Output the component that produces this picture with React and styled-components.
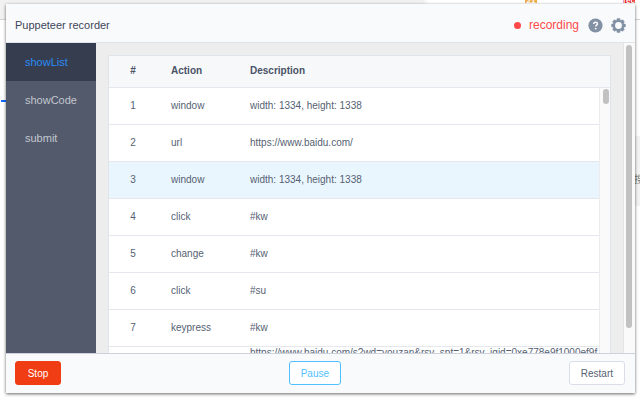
import styled, { createGlobalStyle } from "styled-components";
import { useState } from "react";

const steps = [
  { id: 1, action: "window", description: "width: 1334, height: 1338" },
  { id: 2, action: "url", description: "https://www.baidu.com/" },
  { id: 3, action: "window", description: "width: 1334, height: 1338" },
  { id: 4, action: "click", description: "#kw" },
  { id: 5, action: "change", description: "#kw" },
  { id: 6, action: "click", description: "#su" },
  { id: 7, action: "keypress", description: "#kw" },
  {
    id: 8,
    action: "url",
    description:
      "https://www.baidu.com/s?wd=youzan&rsv_spt=1&rsv_iqid=0xe778e9f1000ef9f5&issp=1&f=8&rsv_bp=0&rsv_idx=2&ie=utf-8&tn=baiduhome_pg&rsv_enter=1&rsv_sug3=6&rsv_sug1=4",
  },
];

const menu = ["showList", "showCode", "submit"];

export default function App() {
  const [active, setActive] = useState("showList");
  const [hovered, setHovered] = useState(3);

  return (
    <Page>
      <GlobalStyle />
      <Backdrop>
        <TopStrip>
          <Badge $color="#f0ad4e">21</Badge>
          <Badge $color="#ee1c25">rec</Badge>
        </TopStrip>
        <PageMark />
        <PageSide>
          <span>搜</span>
        </PageSide>
      </Backdrop>

      <Panel>
        <Header>
          <Title>Puppeteer recorder</Title>
          <Status>recording</Status>
          <IconButton aria-label="Help">
            <HelpIcon />
          </IconButton>
          <IconButton aria-label="Settings">
            <GearIcon />
          </IconButton>
        </Header>

        <Body>
          <Sidebar>
            {menu.map((item) => (
              <MenuItem key={item} $active={item === active} onClick={() => setActive(item)}>
                {item}
              </MenuItem>
            ))}
          </Sidebar>
          <Content>
            <TableCard>
              <Table>
                <thead>
                  <tr>
                    <th>#</th>
                    <th>Action</th>
                    <th>Description</th>
                  </tr>
                </thead>
                <tbody>
                  {steps.map((step) => (
                    <Row
                      key={step.id}
                      $hovered={step.id === hovered}
                      onMouseEnter={() => setHovered(step.id)}
                    >
                      <td>{step.id}</td>
                      <td>{step.action}</td>
                      <td>{step.description}</td>
                    </Row>
                  ))}
                </tbody>
              </Table>
              <InnerTrack>
                <Thumb $height="15px" />
              </InnerTrack>
            </TableCard>
          </Content>
          <OuterTrack>
            <Thumb $height="92%" />
          </OuterTrack>
        </Body>

        <Footer>
          <StopButton>Stop</StopButton>
          <PauseButton>Pause</PauseButton>
          <Button>Restart</Button>
        </Footer>
      </Panel>
    </Page>
  );
}

function HelpIcon() {
  return (
    <svg width="15" height="15" viewBox="0 0 15 15" aria-hidden="true">
      <circle cx="7.5" cy="7.5" r="7.1" fill="#8391a5" />
      <path
        d="M5.7 6.1c0-1.2.8-1.9 1.9-1.9s1.9.7 1.9 1.6c0 1.4-1.8 1.3-1.8 2.8"
        fill="none"
        stroke="#fff"
        strokeWidth="1.4"
      />
      <circle cx="7.7" cy="10.6" r="0.9" fill="#fff" />
    </svg>
  );
}

function GearIcon() {
  return (
    <svg width="15" height="15" viewBox="0 0 15 15" aria-hidden="true">
      <g fill="#8391a5">
        {[0, 45, 90, 135].map((angle) => (
          <rect
            key={angle}
            x="5.7"
            y="0.3"
            width="3.6"
            height="14.4"
            rx="0.7"
            transform={`rotate(${angle} 7.5 7.5)`}
          />
        ))}
        <circle cx="7.5" cy="7.5" r="5.7" />
      </g>
      <circle cx="7.5" cy="7.5" r="3.4" fill="#f9fafc" />
    </svg>
  );
}

// Page
const GlobalStyle = createGlobalStyle`
  * {
    box-sizing: border-box;
  }
  body {
    margin: 0;
    background: #fff;
    font-family: "Liberation Sans", Arial, "Noto Sans CJK SC", sans-serif;
  }
  button {
    font-family: inherit;
    cursor: pointer;
  }
`;

const Page = styled.div`
  position: relative;
  height: 100vh;
  padding: 4px 5px 7px 6px;
  overflow: hidden;
`;

const Backdrop = styled.div`
  position: absolute;
  inset: 0;
`;

const TopStrip = styled.div`
  display: flex;
  justify-content: flex-end;
  gap: 86px;
  height: 20px;
  padding-right: 5px;
  border-bottom: 1px solid #d4d4d4;
  background: linear-gradient(to right, #f1f1f1 66%, #fff 67%);
`;

const Badge = styled.span`
  height: 3px;
  width: 12px;
  overflow: hidden;
  background: ${(props) => props.$color};
  color: #fff;
  font-size: 8px;
  font-weight: bold;
  line-height: 1px;
  text-align: center;
`;

const PageMark = styled.div`
  width: 8px;
  height: 2px;
  margin: 80px 0 0 1px;
  background: #0a6cff;
`;

const PageSide = styled.div`
  width: 6px;
  height: 70px;
  margin: 34px 0 0 auto;
  padding-top: 36px;
  overflow: hidden;
  background: #f3f3f3;
  color: #777;
  font-size: 10px;
  line-height: 16px;
`;

const Panel = styled.div`
  position: relative;
  display: flex;
  flex-direction: column;
  height: 100%;
  background: #f9fafc;
  box-shadow: 0 1px 3px rgba(0, 0, 0, 0.6);
`;

// Header
const Header = styled.header`
  display: flex;
  align-items: center;
  height: 39px;
  padding: 4px 9px 0 9px;
  border-bottom: 1px solid #e0e3ec;
`;

const Title = styled.h1`
  flex: 1;
  margin: 0;
  color: #3c4659;
  font-size: 11px;
  font-weight: normal;
`;

const Status = styled.span`
  display: flex;
  align-items: center;
  gap: 8px;
  margin-right: 9px;
  color: #ff4949;
  font-size: 12px;

  &::before {
    content: "";
    width: 7px;
    height: 7px;
    border-radius: 50%;
    background: #ff4949;
  }
`;

const IconButton = styled.button`
  display: flex;
  margin-left: 8px;
  padding: 0;
  border: 0;
  background: none;

  ${Status} + & {
    margin-left: 0;
  }
`;

// Body
const Body = styled.div`
  display: flex;
  flex: 1;
  min-height: 0;
`;

const Sidebar = styled.nav`
  display: flex;
  flex-direction: column;
  width: 90px;
  background: #525a6c;
`;

const MenuItem = styled.button`
  height: 38px;
  padding: 0 19px;
  border: 0;
  background: ${(props) => (props.$active ? "#363d4f" : "transparent")};
  color: ${(props) => (props.$active ? "#2b8cf5" : "#c3c7cf")};
  font-size: 11px;
  text-align: left;
`;

const Content = styled.main`
  flex: 1;
  min-width: 0;
  padding: 12px 12px 0 12px;
  overflow: hidden;
  background: #ededed;
`;

const TableCard = styled.div`
  display: flex;
  border: 1px solid #dfe3ea;
  background: #f7f8fa;
`;

const Table = styled.table`
  flex: 1;
  table-layout: fixed;
  border-collapse: collapse;
  background: #fff;
  color: #565f73;
  font-size: 10px;
  line-height: 12px;

  th,
  td {
    height: 37px;
    padding: 0 0 0 14px;
    border-bottom: 1px solid #e4e7ed;
    text-align: left;
    word-break: break-all;
  }

  th {
    height: 31px;
    background: #f7f8fa;
    color: #4a5367;
  }

  th:first-child,
  td:first-child {
    width: 48px;
    padding: 0;
    text-align: center;
  }

  th:nth-child(2) {
    width: 79px;
  }
`;

const Row = styled.tr`
  background: ${(props) => (props.$hovered ? "#eaf6fe" : "#fff")};
`;

const Thumb = styled.div`
  width: 6px;
  height: ${(props) => props.$height};
  border-radius: 3px;
  background: #c1c1c1;
`;

const InnerTrack = styled.div`
  width: 11px;
  margin-top: 31px;
  padding: 1px 0 0 3px;
  border-top: 1px solid #e4e7ed;
  border-left: 1px solid #ececec;
  background: #fafafa;
`;

const OuterTrack = styled.div`
  width: 12px;
  padding: 2px 0 0 2px;
  border-left: 1px solid #e4e4e4;
  background: #fafafa;
`;

// Footer
const Footer = styled.footer`
  display: flex;
  align-items: center;
  justify-content: space-between;
  height: 40px;
  padding: 0 10px 1px 9px;
  border-top: 1px solid #cdd1dc;
`;

const Button = styled.button`
  min-width: 46px;
  height: 24px;
  padding: 0 11px;
  border: 1px solid #dadeea;
  border-radius: 3px;
  background: #fff;
  color: #565f73;
  font-size: 10px;
`;

const StopButton = styled(Button)`
  border-color: #f03d13;
  background: #f03d13;
  color: #fff;
`;

const PauseButton = styled(Button)`
  border-color: #50bfff;
  color: #50bfff;
`;
